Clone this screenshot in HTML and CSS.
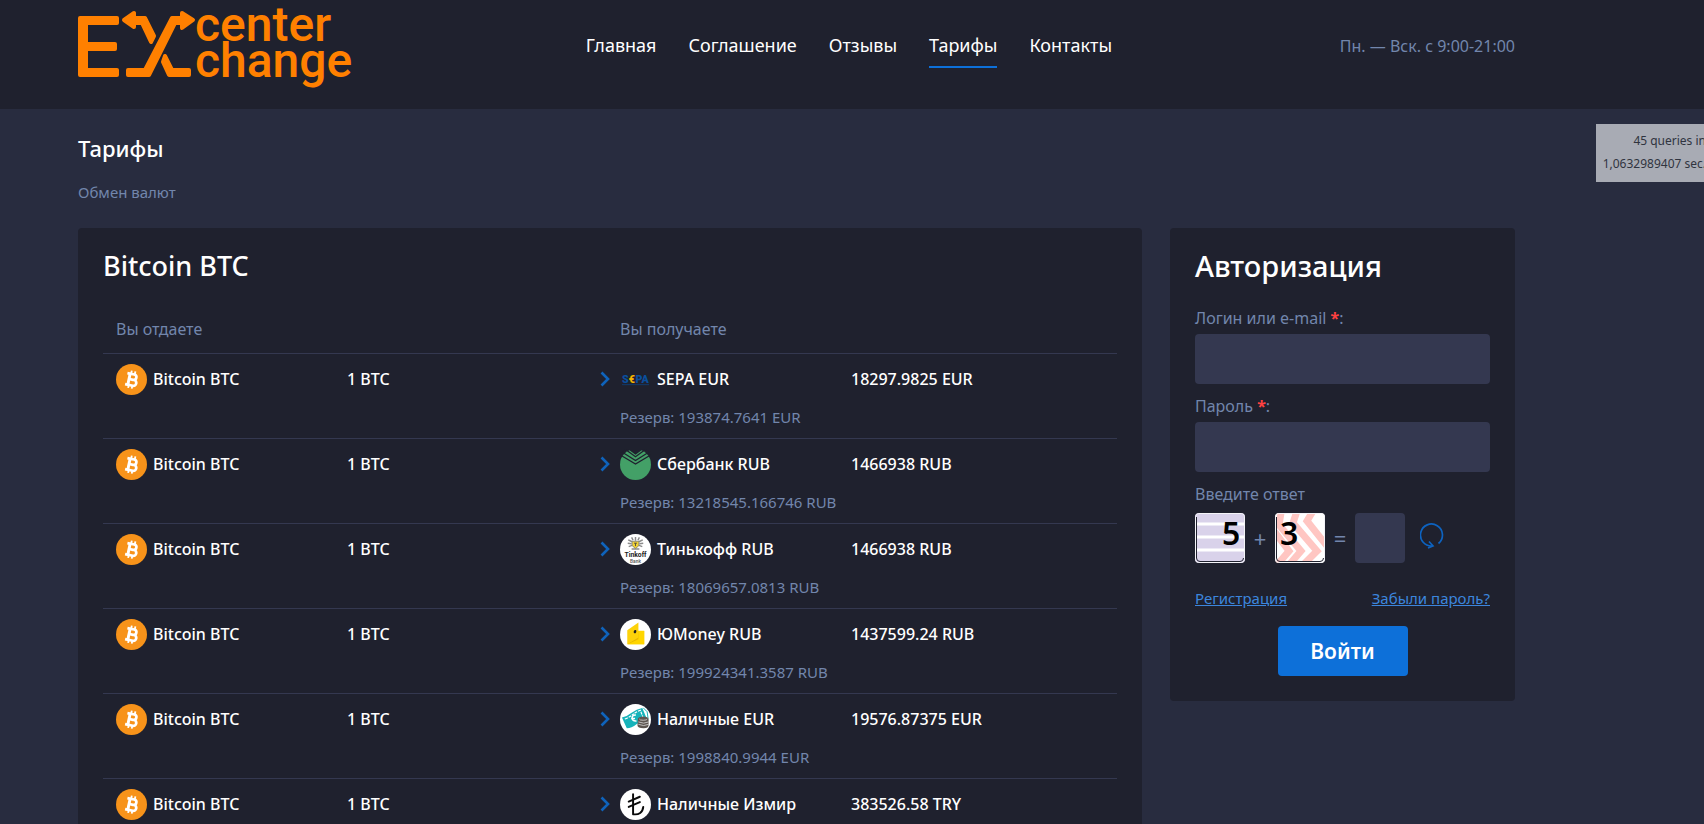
FILE: index.html
```html
<!DOCTYPE html>
<html lang="ru">
<head>
  <meta charset="UTF-8">
  <title>Тарифы – Exchange Center</title>
  <link rel="stylesheet" href="styles.css">
</head>
<body>

<svg class="sprite" aria-hidden="true">
  <symbol id="btc" viewBox="0 0 32 32">
    <circle cx="16" cy="16" r="16" fill="#f7931a"/>
    <g transform="rotate(12 16 16)" fill="none" stroke="#fff" stroke-width="2.8">
      <path d="M10.5 10.4h7.2a2.8 2.8 0 0 1 0 5.6h-4M13.6 16h5a3 3 0 0 1 0 6h-8.1"/>
      <path d="M13.4 10.4v11.6" stroke-width="3"/>
      <path d="M14.4 7v3M18.2 7v3M14.4 22v3.200M18.2 22v3.200" stroke-width="1.9"/>
    </g>
  </symbol>
  <symbol id="chevron" viewBox="0 0 10 16">
    <path d="M1.500 1.500L8 8l-6.500 6.500" fill="none" stroke="#0f63bb" stroke-width="2.600"/>
  </symbol>
  <symbol id="sepa" viewBox="0 0 32 32">
    <g font-family="Roboto, sans-serif" font-weight="900" font-size="11">
      <text x="2" y="19.500" fill="#0a4f9e">S</text>
      <text x="9" y="19.500" fill="#f5b400">€</text>
      <text x="16" y="19.500" fill="#0a4f9e">PA</text>
    </g>
    <path d="M2 21.300h28" stroke="#123a6b" stroke-width="1"/>
  </symbol>
  <symbol id="sber" viewBox="0 0 32 32">
    <circle cx="16" cy="16" r="16" fill="#43a067"/>
    <path d="M0 -1h32v4L24 0l-8 6L8 0 0 4z" fill="#1f212e"/>
    <path d="M5 0l11 8 11-8M2 3l14 9 14-9M0 6l16 9.500L32 6" fill="none" stroke="#1f212e" stroke-width="1.300"/>
  </symbol>
  <symbol id="tinkoff" viewBox="0 0 32 32">
    <circle cx="16" cy="16" r="16" fill="#fff"/>
    <g stroke="#8c8c8c" stroke-width="1.500" fill="none">
      <path d="M16 3v4M12 3.500l1.500 3M20 3.500l-1.500 3M8.500 6l4 2M23.500 6l-4 2M8 9.500l4 .5M24 9.500l-4 .5M9 13l4-1.500M23 13l-4-1.500M12 15.500h8"/>
    </g>
    <path d="M12.500 7.500h7v4.500l-3.500 3-3.500-3z" fill="#f2d233" stroke="#777" stroke-width=".8"/>
    <path d="M14.500 9.500h3M16 9.500v3" stroke="#444" stroke-width=".9"/>
    <text x="16" y="23.500" text-anchor="middle" font-family="Roboto, sans-serif" font-weight="700" font-size="7" fill="#222">Tinkoff</text>
    <text x="16" y="29.500" text-anchor="middle" font-family="Roboto, sans-serif" font-size="5" fill="#555">Bank</text>
  </symbol>
  <symbol id="yoomoney" viewBox="0 0 32 32">
    <circle cx="16" cy="16" r="16" fill="#fff"/>
    <path d="M7.500 11.500L19 3.500v8.500h6v14H7.500z" fill="#fdd20a"/>
    <path d="M7.500 26L19 19v-6.500l3 5-3 5z" fill="#e8b800"/>
    <path d="M19 12.500h6V26H8l11-5z" fill="#ffd600"/>
    <ellipse cx="15.500" cy="13" rx="1.300" ry="1.800" transform="rotate(25 15.500 13)" fill="#222"/>
  </symbol>
  <symbol id="cash" viewBox="0 0 32 32">
    <circle cx="16" cy="16" r="16" fill="#fff"/>
    <path d="M2 14q5-1 10-5t11-5l5 12q-6 1-11 5T7 25z" fill="#16b3ba"/>
    <path d="M5 15.500q5-2 8-4.500t8-4.500l3 8" fill="none" stroke="#fff" stroke-width="1.200" stroke-dasharray="3 1"/>
    <path d="M16.500 11.500q-4-.5-4 3t4.500 3M11.500 15h4" fill="none" stroke="#fff" stroke-width="1.500"/>
    <path d="M24 4l4 4 1 7" fill="none" stroke="#16b3ba"/>
    <path d="M18.500 15.500a5.500 2.500 0 0 1 11 0V22q0 3-5 3-6.500 0-6.500-3z" fill="#5d5550"/>
    <path d="M20 15.500a4 1.300 0 0 0 8 0M19 18.500q5.500 2.500 10.500 0M19 21q5.500 2.500 10.500 0" fill="none" stroke="#ddd" stroke-width=".8"/>
  </symbol>
  <symbol id="lira" viewBox="0 0 32 32">
    <circle cx="16" cy="16" r="16" fill="#fff"/>
    <path d="M13.500 5.500V26c6 1 10-2 10.500-7.500M9 13l11.500-5M9 18.500L20.500 13.500" fill="none" stroke="#0a0a0a" stroke-width="2" stroke-linecap="round" stroke-linejoin="round"/>
  </symbol>
</svg>

<div class="debug">45 queries in<br>1,0632989407 sec.</div>

<header class="header">
  <div class="container header-row">
    <a class="logo" href="#" aria-label="Exchange Center">
      <svg width="280" height="90" viewBox="0 0 280 90">
        <g fill="#ff8000" stroke="#ff8000" stroke-width="4" stroke-linejoin="round">
          <path d="M2 18h37v5H8v21h29v5H8v21h31v5H2z"/>
          <path d="M46 20l10-7v5h11l9 18-3 6-9-19h-8v4z"/>
          <path d="M50 70h17l27-52h10v-5l11 7-11 8v-5h-7L71 75H50z"/>
          <path d="M87 56l7 14h17v5H91l-6-13z"/>
        </g>
        <g class="logo-text">
          <text x="117" y="41">center</text>
          <text x="117" y="77">change</text>
        </g>
      </svg>
    </a>
    <nav class="menu">
      <a href="#">Главная</a>
      <a href="#">Соглашение</a>
      <a href="#">Отзывы</a>
      <a class="current" href="#">Тарифы</a>
      <a href="#">Контакты</a>
    </nav>
    <div class="hours">Пн. — Вск. с 9:00-21:00</div>
  </div>
</header>

<div class="container">
  <h1>Тарифы</h1>
  <p class="subtitle">Обмен валют</p>

  <div class="columns">
    <main class="card tariffs">
      <h2>Bitcoin BTC</h2>
      <table>
        <colgroup>
          <col class="col-name">
          <col class="col-sum">
          <col class="col-arrow">
          <col class="col-get">
          <col>
        </colgroup>
        <thead>
          <tr><th colspan="3">Вы отдаете</th><th colspan="2" class="get">Вы получаете</th></tr>
        </thead>
        <tbody>
          <tr>
            <td><div class="coin"><svg><use href="#btc"/></svg>Bitcoin BTC</div></td>
            <td><div class="sum">1 BTC</div></td>
            <td><div class="arrow"><svg><use href="#chevron"/></svg></div></td>
            <td class="get"><div class="coin"><svg><use href="#sepa"/></svg>SEPA EUR</div><div class="reserve">Резерв: 193874.7641 EUR</div></td>
            <td class="get"><div class="sum">18297.9825 EUR</div></td>
          </tr>
          <tr>
            <td><div class="coin"><svg><use href="#btc"/></svg>Bitcoin BTC</div></td>
            <td><div class="sum">1 BTC</div></td>
            <td><div class="arrow"><svg><use href="#chevron"/></svg></div></td>
            <td class="get"><div class="coin"><svg><use href="#sber"/></svg>Сбербанк RUB</div><div class="reserve">Резерв: 13218545.166746 RUB</div></td>
            <td class="get"><div class="sum">1466938 RUB</div></td>
          </tr>
          <tr>
            <td><div class="coin"><svg><use href="#btc"/></svg>Bitcoin BTC</div></td>
            <td><div class="sum">1 BTC</div></td>
            <td><div class="arrow"><svg><use href="#chevron"/></svg></div></td>
            <td class="get"><div class="coin"><svg><use href="#tinkoff"/></svg>Тинькофф RUB</div><div class="reserve">Резерв: 18069657.0813 RUB</div></td>
            <td class="get"><div class="sum">1466938 RUB</div></td>
          </tr>
          <tr>
            <td><div class="coin"><svg><use href="#btc"/></svg>Bitcoin BTC</div></td>
            <td><div class="sum">1 BTC</div></td>
            <td><div class="arrow"><svg><use href="#chevron"/></svg></div></td>
            <td class="get"><div class="coin"><svg><use href="#yoomoney"/></svg>ЮMoney RUB</div><div class="reserve">Резерв: 199924341.3587 RUB</div></td>
            <td class="get"><div class="sum">1437599.24 RUB</div></td>
          </tr>
          <tr>
            <td><div class="coin"><svg><use href="#btc"/></svg>Bitcoin BTC</div></td>
            <td><div class="sum">1 BTC</div></td>
            <td><div class="arrow"><svg><use href="#chevron"/></svg></div></td>
            <td class="get"><div class="coin"><svg><use href="#cash"/></svg>Наличные EUR</div><div class="reserve">Резерв: 1998840.9944 EUR</div></td>
            <td class="get"><div class="sum">19576.87375 EUR</div></td>
          </tr>
          <tr>
            <td><div class="coin"><svg><use href="#btc"/></svg>Bitcoin BTC</div></td>
            <td><div class="sum">1 BTC</div></td>
            <td><div class="arrow"><svg><use href="#chevron"/></svg></div></td>
            <td class="get"><div class="coin"><svg><use href="#lira"/></svg>Наличные Измир</div></td>
            <td class="get"><div class="sum">383526.58 TRY</div></td>
          </tr>
        </tbody>
      </table>
    </main>

    <form class="card login">
      <h2>Авторизация</h2>
      <label for="login">Логин или e-mail <b>*</b>:</label>
      <input type="text" id="login">
      <label for="password">Пароль <b>*</b>:</label>
      <input type="password" id="password">
      <label for="answer">Введите ответ</label>
      <div class="captcha">
        <svg class="digit" viewBox="0 0 50 50">
          <rect width="50" height="50" fill="#d9d2ea"/>
          <path d="M0 11h50M0 24h50M0 37h50" stroke="#fff" stroke-width="3"/>
          <text x="27" y="32">5</text>
          <path class="frame-in" d="M1.500 4v41q0 3.500 3.500 3.500h40q3.500 0 3.500-3.500"/>
          <rect class="frame" x=".5" y=".5" width="49" height="49" rx="3"/>
        </svg>
        <span>+</span>
        <svg class="digit" viewBox="0 0 50 50">
          <rect width="50" height="50" fill="#fff"/>
          <path d="M-4 14L14 38 2 52M6 0L4 12l22 26-12 14M22 -2l-4 12 24 28-14 14M38 -2l-6 10 24 30" fill="none" stroke="#ffc6c2" stroke-width="7"/>
          <text x="5" y="32">3</text>
          <path class="frame-in" d="M1.500 4v41q0 3.500 3.500 3.500h40q3.500 0 3.500-3.500"/>
          <rect class="frame" x=".5" y=".5" width="49" height="49" rx="3"/>
        </svg>
        <span>=</span>
        <input type="text" id="answer">
        <button type="button" class="reload" aria-label="Обновить">
          <svg width="24" height="26" viewBox="0 0 24 26">
            <path d="M18.500 20.500A11 11 0 1 0 12.500 23" fill="none" stroke="#0d63c0" stroke-width="1.700"/>
            <path d="M9 18.500l4 4.500-5 2" fill="none" stroke="#0d63c0" stroke-width="1.700"/>
          </svg>
        </button>
      </div>
      <div class="links">
        <a href="#">Регистрация</a>
        <a href="#">Забыли пароль?</a>
      </div>
      <button type="submit" class="submit">Войти</button>
    </form>
  </div>
</div>

</body>
</html>
```
FILE: styles.css
```css
* {
  box-sizing: border-box;
}
body {
  margin: 0;
  font-family: "Noto Sans", "Open Sans", sans-serif;
  font-size: 16px;
  line-height: 24px;
  background-color: #282c3f;
  color: #fff;
  position: relative;
  overflow-x: hidden;
}
h1, h2, p {
  margin: 0;
}
.sprite {
  display: none;
}
.container {
  padding: 0 189px 0 78px;
}

/* query counter */
.debug {
  position: absolute;
  top: 124px;
  right: -9px;
  padding: 5px 7px 7px;
  background-color: #a8abb4;
  color: #30343f;
  font-size: 12px;
  line-height: 23px;
  text-align: right;
  white-space: nowrap;
}

/* header */
.header {
  background-color: #1f212e;
}
.header-row {
  display: flex;
  justify-content: space-between;
  height: 109px;
}
.logo-text {
  fill: #ff8000;
  font-family: Roboto, sans-serif;
  font-size: 48px;
  font-weight: 500;
}
.menu {
  display: flex;
  gap: 32px;
  padding-top: 33px;
  font-size: 18px;
}
.menu a {
  height: 35px;
  color: #fff;
  text-decoration: none;
}
.menu .current {
  border-bottom: 2px solid #0d70d9;
}
.hours {
  padding-top: 34px;
  color: #7286ac;
}

h1 {
  padding-top: 23px;
  font-size: 22px;
  font-weight: 500;
  line-height: 32px;
}
.subtitle {
  padding: 17px 0 24px;
  color: #7286ac;
  font-size: 15px;
  line-height: 23px;
}
.columns {
  display: flex;
  align-items: flex-start;
  gap: 28px;
}
.card {
  padding: 25px;
  background-color: #1f212e;
  border-radius: 4px;
}
.card h2 {
  font-weight: 500;
  line-height: 26px;
}

/* tariffs */
.tariffs {
  flex: 1;
}
.tariffs h2 {
  margin-bottom: 26px;
  font-size: 27px;
}
table {
  width: 100%;
  table-layout: fixed;
  border-collapse: collapse;
}
.col-name, .col-get {
  width: 231px;
}
.col-sum {
  width: 253px;
}
.col-arrow {
  width: 33px;
}
th {
  height: 48px;
  padding: 0 13px;
  color: #7286ac;
  font-weight: 400;
  text-align: left;
}
td {
  height: 85px;
  padding: 10px 0 9px 13px;
  border-top: 1px solid #343850;
  vertical-align: top;
  font-weight: 500;
  white-space: nowrap;
}
.get {
  padding-left: 0;
}
.coin, .sum, .arrow {
  display: flex;
  align-items: center;
  height: 31px;
}
.coin {
  gap: 6px;
}
.coin svg {
  width: 31px;
  height: 31px;
}
.arrow svg {
  width: 10px;
  height: 16px;
}
.sum {
  max-width: 131px;
  overflow: hidden;
}
.reserve {
  padding-top: 10px;
  color: #7286ac;
  font-size: 15px;
  font-weight: 400;
}

/* login form */
.login {
  width: 345px;
}
.login h2 {
  margin-bottom: 27px;
  font-size: 29px;
}
.login label {
  display: block;
  margin-bottom: 4px;
  color: #7286ac;
}
.login b {
  color: #ff4141;
}
.login input {
  display: block;
  width: 100%;
  height: 50px;
  margin: 0 0 10px;
  padding: 0 15px;
  background-color: #343850;
  border: 0;
  border-radius: 4px;
  color: #fff;
  font: inherit;
}
.captcha {
  display: flex;
  align-items: center;
  margin: 7px 0 23px;
}
.captcha .digit {
  width: 50px;
  height: 50px;
  border-radius: 4px;
}
.captcha text {
  font-size: 32px;
  font-weight: 600;
}
.captcha span {
  width: 30px;
  color: #7286ac;
  font-size: 22px;
  text-align: center;
}
.captcha .digit, .captcha span {
  flex: none;
}
.login .captcha input {
  width: 50px;
  margin: 0;
}
.frame, .frame-in {
  fill: none;
  stroke: #f4f4f8;
}
.frame-in {
  stroke: #1f212e;
}
.reload {
  height: 26px;
  margin: 0 0 4px 15px;
  padding: 0;
  background: none;
  border: 0;
}
.links {
  display: flex;
  justify-content: space-between;
  margin-bottom: 16px;
  font-size: 15px;
}
.links a {
  color: #3c86dd;
}
.submit {
  display: block;
  width: 130px;
  height: 50px;
  margin: 0 auto;
  background-color: #0d70d9;
  border: 0;
  border-radius: 4px;
  color: #fff;
  font: inherit;
  font-size: 21px;
  font-weight: 600;
}
```
